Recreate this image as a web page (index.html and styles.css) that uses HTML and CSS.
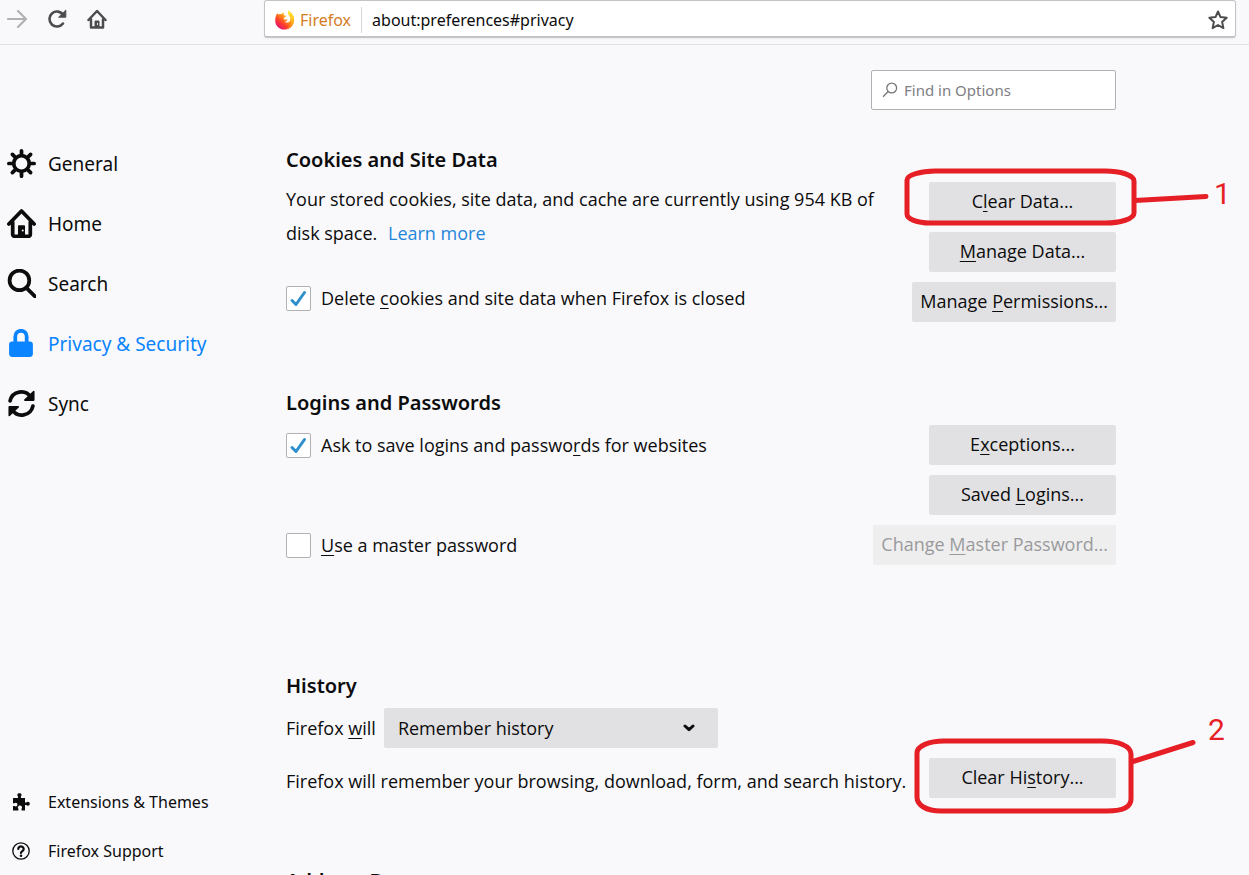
FILE: index.html
```html
<!DOCTYPE html>
<html lang="en">
<head>
<meta charset="utf-8">
<meta name="viewport" content="width=device-width, initial-scale=1">
<title>Options</title>
<link rel="stylesheet" href="styles.css">
</head>
<body>
<header class="toolbar">
  <div class="toolbar-buttons">
    <button class="tool tool-disabled" type="button" aria-label="Forward" disabled>
      <svg viewBox="0 0 20 20" fill="none" stroke="currentColor" stroke-width="2.200" stroke-linecap="round" stroke-linejoin="round"><path d="M1 10H18M11 2l8 8-8 8"/></svg>
    </button>
    <button class="tool" type="button" aria-label="Reload">
      <svg viewBox="0 0 20 20" fill="none" stroke="currentColor" stroke-width="2.6" stroke-linecap="round"><path d="M16 14.500A7.500 7.500 0 1 1 16.300 6"/><path d="M18.800 1.500V8.200H12z" fill="currentColor" stroke-width="1" stroke-linejoin="round"/></svg>
    </button>
    <button class="tool" type="button" aria-label="Home">
      <svg viewBox="0 0 20 20" fill="none" stroke="currentColor" stroke-width="2.500" stroke-linecap="round" stroke-linejoin="round"><path d="M1.500 11 10 2l8.500 9M4 10.500V18.500H16V10.500"/><path d="M8 18v-6h4v6z" fill="currentColor" stroke-width="1"/><path d="M10.500 14.500v1" stroke="#f9f9fb" stroke-width="1"/></svg>
    </button>
  </div>
  <div class="urlbar">
    <span class="identity">
      <svg class="logo" viewBox="0 0 20 20" aria-hidden="true">
        <defs>
          <linearGradient id="flame" x1="0.850" y1="0.100" x2="0.200" y2="0.900"><stop offset="0" stop-color="#ffe22e"/><stop offset="0.400" stop-color="#ff9a1a"/><stop offset="0.700" stop-color="#ff4327"/><stop offset="1" stop-color="#e5156b"/></linearGradient>
          <linearGradient id="tail" x1="0" y1="0" x2="0" y2="1"><stop offset="0" stop-color="#fff03a"/><stop offset="0.600" stop-color="#ffb41c"/><stop offset="1" stop-color="#ff7a1a"/></linearGradient>
        </defs>
        <path fill="url(#flame)" d="M2.300 3.200C2.700 4 3.200 4.300 3.800 4.400 4.800 3.900 6 3.900 6.800 4.200 7 3.300 7.800 2.500 8.600 2.200 8.200 3.300 8.500 4.600 9.300 5.200L11 6c-.4 1.200-1.800 1.400-2.300 2.200-.2.900.8 1.600 1.800 1.400.9-.2 1.700-.2 2 .4-.6 1.300-2 1.900-3.400 1.600 1.800 1.600 4.500 1.200 5.700-.7 1-1.700.8-3.900-.4-5.400C13.200 4 12.600 2.200 13.800.6c.5 1.400 2.600 2.200 3.700 4 3 4.500 1.700 10.500-2.700 13.500C10.200 21 4.200 19.600 1.500 15.200-.6 11.700 0 6.500 2.300 3.200z"/>
        <path fill="url(#tail)" d="M13.800.6c.5 1.400 2.600 2.200 3.700 4 2.700 4 1.900 9.200-1.500 12.400-1.500 1.300-3.800 2-5.500 1.700 3.500-1 5.700-3.600 5.700-7.200 0-3-1.400-4.600-2.400-6.300C13 3.800 12.800 2 13.800.6z"/>
      </svg>
      <span>Firefox</span>
    </span>
    <input class="address" type="text" value="about:preferences#privacy" aria-label="Address">
    <button class="tool star" type="button" aria-label="Bookmark this page">
      <svg viewBox="0 0 20 20" fill="none" stroke="currentColor" stroke-width="2" stroke-linejoin="round"><path d="M10 1.500l2.500 5.600 6.200.7-4.600 4.100 1.300 6.200L10 15l-5.400 3.100 1.300-6.200L1.300 7.800l6.200-.7z"/></svg>
    </button>
  </div>
</header>

<div class="page">
  <aside class="sidebar">
    <nav class="nav" aria-label="Categories">
      <a class="nav-item" href="#general">
        <svg viewBox="0 0 28 28" fill="none" stroke="currentColor" stroke-linecap="round"><circle cx="14" cy="14" r="7.500" stroke-width="3.600"/><path stroke-width="3.600" d="M14 5V1.800M14 23v3.200M5 14H1.800M23 14h3.200M7.600 7.600 5.200 5.200M20.400 7.600l2.400-2.400M7.600 20.400l-2.400 2.400M20.400 20.400l2.400 2.400"/></svg>
        <span>General</span>
      </a>
      <a class="nav-item" href="#home">
        <svg viewBox="0 0 28 28" fill="none" stroke="currentColor" stroke-width="3.600" stroke-linecap="round" stroke-linejoin="round"><path d="M1.800 14.500 14 2l12.200 12.500M5.500 12.500V24.500a1.800 1.800 0 0 0 1.800 1.800H20.700a1.800 1.800 0 0 0 1.800-1.800V12.500"/><path d="M11.500 25.500v-9h5v9z" fill="currentColor" stroke-width="1.800"/><circle cx="15.200" cy="20.800" r="1" fill="#f9f9fb" stroke="none"/></svg>
        <span>Home</span>
      </a>
      <a class="nav-item" href="#search">
        <svg viewBox="0 0 28 28" fill="none" stroke="currentColor" stroke-width="3.600" stroke-linecap="round"><circle cx="12" cy="11" r="9.500"/><path d="M19 18.500l8 8"/></svg>
        <span>Search</span>
      </a>
      <a class="nav-item nav-current" href="#privacy" aria-current="page">
        <svg viewBox="0 0 28 28" fill="none"><path d="M8 14V7.200a5.500 5.500 0 0 1 11 0V14" stroke="currentColor" stroke-width="3.600"/><rect x="2" y="12" width="23" height="15" rx="3" fill="currentColor"/></svg>
        <span>Privacy &amp; Security</span>
      </a>
      <a class="nav-item" href="#sync">
        <svg viewBox="0 0 28 28" fill="none" stroke="currentColor" stroke-width="3.600" stroke-linecap="round" stroke-linejoin="round"><path d="M3 11.500A11 11 0 0 1 23 8M25 16.500A11 11 0 0 1 5 20"/><path d="M25.800 2.500v8.200h-8.600z" fill="currentColor" stroke-width="1.600"/><path d="M2.200 25.500v-8.200h8.600z" fill="currentColor" stroke-width="1.600"/></svg>
        <span>Sync</span>
      </a>
    </nav>
    <div class="links">
      <a class="link-item" href="#addons">
        <svg viewBox="0 0 18 18" fill="currentColor"><path d="M1 5h5V3.500C5.200 2.800 5.100 1 6.100.5c.8-.5 2-.5 2.700 0 1 .6.900 2.300.1 3V5H13v4.500h1.300c.7-1 2.500-1 3.100 0 .5.800.5 1.900 0 2.600-.6 1-2.400 1-3.100 0H13V17.500H9.500v-1.800c.8-.8.700-2.300-.3-2.800-.8-.4-1.800-.4-2.500 0-1 .5-1.100 2-.3 2.800v1.800H1V13h1.500c.8.700 2.300.6 2.700-.4.300-.7.300-1.400 0-2.100-.5-1-2-1.100-2.700-.3H1z"/></svg>
        <span>Extensions &amp; Themes</span>
      </a>
      <a class="link-item" href="#support">
        <svg viewBox="0 0 18 18" fill="none" stroke="currentColor"><circle cx="9" cy="9" r="8.200" stroke-width="1.300"/><path d="M6.300 7a2.700 2.500 0 1 1 4.200 2C9.500 9.700 9 10 9 11" stroke-width="2.200" stroke-linecap="round"/><circle cx="9" cy="13.800" r="1.300" fill="currentColor" stroke="none"/></svg>
        <span>Firefox Support</span>
      </a>
    </div>
  </aside>

  <main class="content">
    <label class="find">
      <svg viewBox="0 0 16 16" fill="none" stroke="currentColor" stroke-width="1.300" aria-hidden="true"><circle cx="9.700" cy="6" r="4.900"/><path d="M6.200 9.500 1 14.700"/></svg>
      <input type="search" placeholder="Find in Options" aria-label="Find in Options">
    </label>

    <section class="group group-cookies">
      <h2>Cookies and Site Data</h2>
      <div class="columns">
        <div class="details">
          <p class="usage">Your stored cookies, site data, and cache are currently using 954 KB of disk space. <a class="learn" href="#learn">Learn more</a></p>
          <label class="check">
            <span class="box"><input type="checkbox" checked><svg viewBox="0 0 25 25" aria-hidden="true"><path d="M6 14.500 10 18.500 18.500 6.500"/></svg></span>
            <span>Delete <u>c</u>ookies and site data when Firefox is closed</span>
          </label>
        </div>
        <div class="actions">
          <div class="marked">
            <button class="btn" type="button">C<u>l</u>ear Data...</button>
            <svg class="mark mark-one" viewBox="0 0 310 60" aria-hidden="true"><path d="M31 4H201C216 4 230 8 230 14V46C230 52 216 56 201 56H26C13 56 3 52 3 47V13C3 8 17 4 31 4zM231 33.500 302 29.500"/></svg>
            <span class="number number-one">1</span>
          </div>
          <button class="btn" type="button"><u>M</u>anage Data...</button>
          <button class="btn" type="button">Manage <u>P</u>ermissions...</button>
        </div>
      </div>
    </section>

    <section class="group group-logins">
      <h2>Logins and Passwords</h2>
      <div class="rows">
        <div class="row">
          <label class="check">
            <span class="box"><input type="checkbox" checked><svg viewBox="0 0 25 25" aria-hidden="true"><path d="M6 14.500 10 18.500 18.500 6.500"/></svg></span>
            <span>Ask to save logins and passwo<u>r</u>ds for websites</span>
          </label>
          <button class="btn" type="button">E<u>x</u>ceptions...</button>
        </div>
        <div class="row row-end">
          <button class="btn" type="button">Saved <u>L</u>ogins...</button>
        </div>
        <div class="row">
          <label class="check">
            <span class="box"><input type="checkbox"><svg viewBox="0 0 25 25" aria-hidden="true"><path d="M6 14.500 10 18.500 18.500 6.500"/></svg></span>
            <span><u>U</u>se a master password</span>
          </label>
          <button class="btn" type="button" disabled>Change <u>M</u>aster Password...</button>
        </div>
      </div>
    </section>

    <section class="group group-history">
      <h2>History</h2>
      <div class="rows">
        <div class="row row-start">
          <label for="history-mode">Firefox <u>w</u>ill</label>
          <span class="select">
            <select id="history-mode">
              <option>Remember history</option>
              <option>Never remember history</option>
            </select>
            <svg viewBox="0 0 12 8" aria-hidden="true"><path d="M2 2l4 3.700L10 2"/></svg>
          </span>
        </div>
        <div class="row row-last">
          <p>Firefox will remember your browsing, download, form, and search history.</p>
          <div class="marked">
            <button class="btn" type="button">Clear Hi<u>s</u>tory...</button>
            <svg class="mark mark-two" viewBox="0 0 290 80" aria-hidden="true"><path d="M30 4H188C204 4 217 9 217 17V62C217 70 208 74 193 74H27C12 74 3 68 3 60V16C3 9 15 4 30 4zM219 24.500 279 5.500"/></svg>
            <span class="number number-two">2</span>
          </div>
        </div>
      </div>
    </section>

    <section class="group">
      <h2>Address Bar</h2>
    </section>
  </main>
</div>
</body>
</html>
```
FILE: styles.css
```css
* { box-sizing: border-box; }

body {
  display: flex;
  flex-direction: column;
  height: 100vh;
  margin: 0;
  overflow: hidden;
  background: #f9f9fb;
  color: #0c0c0d;
  font: 18px/34px "Open Sans", "Noto Sans", sans-serif;
}

h2, p { margin: 0; }

button, input, select {
  color: inherit;
  font: inherit;
}

a { text-decoration: none; }

u {
  text-decoration-thickness: 1px;
  text-underline-offset: 3px;
}

/* Toolbar */
.toolbar {
  display: flex;
  flex: none;
  align-items: flex-start;
  height: 45px;
  padding-right: 13px;
  border-bottom: 1px solid #e0e0e1;
  font-family: "Noto Sans", "Open Sans", sans-serif;
}

.toolbar-buttons {
  display: flex;
  flex: none;
  gap: 20px;
  width: 264px;
  padding: 9px 0 0 7px;
}

.tool {
  width: 20px;
  height: 20px;
  padding: 0;
  border: 0;
  background: none;
  color: #4c4c4f;
}

.tool svg { display: block; }

.tool-disabled { color: #b1b1b3; }

.urlbar {
  display: flex;
  flex: 1;
  align-items: center;
  height: 38px;
  padding: 2px 7px 0 10px;
  border: 2px solid #c4c4c6;
  border-width: 1px 1px 2px;
  border-radius: 3px;
  background: #fff;
  font-size: 16px;
  box-shadow: 0 1px 3px #0000000d;
}

.identity {
  display: flex;
  align-items: center;
  gap: 5px;
  height: 26px;
  padding-right: 10px;
  border-right: 1px solid #d7d7db;
  color: #d37c24;
}

.logo {
  width: 20px;
  height: 20px;
}

.address {
  flex: 1;
  min-width: 0;
  padding: 0 10px;
  border: 0;
  background: none;
}

/* Page */
.page {
  display: flex;
  flex: 1;
  min-height: 0;
}

.sidebar {
  display: flex;
  flex: none;
  flex-direction: column;
  justify-content: space-between;
  width: 286px;
  padding: 88px 0 0 7px;
  font-family: "Noto Sans", "Open Sans", sans-serif;
}

.nav-item, .link-item {
  display: flex;
  align-items: center;
  color: inherit;
}

.nav-item {
  gap: 12px;
  height: 60px;
  font-size: 19px;
}

.nav-item span { padding-top: 2px; }

.nav-item svg {
  width: 29px;
  height: 29px;
}

.nav-current { color: #0a84ff; }

.link-item {
  gap: 18px;
  height: 49px;
  padding-left: 5px;
  font-size: 16px;
}

.link-item svg {
  width: 18px;
  height: 18px;
}

.content {
  display: flex;
  flex: 1;
  flex-direction: column;
  max-width: 830px;
  padding-top: 25px;
}

.find {
  display: flex;
  flex: none;
  align-items: center;
  align-self: flex-end;
  gap: 6px;
  width: 245px;
  height: 40px;
  margin-bottom: 36px;
  padding: 0 10px;
  border: 1px solid #b1b1b3;
  border-radius: 2px;
  background: #fff;
  color: #76767a;
  font-family: "Noto Sans", "Open Sans", sans-serif;
  font-size: 15px;
}

.find svg {
  flex: none;
  width: 16px;
  height: 16px;
}

.find input {
  flex: 1;
  min-width: 0;
  padding: 0;
  border: 0;
  outline: 0;
  background: none;
}

.find input::placeholder { color: #808084; }

.group { flex: none; }
.group-cookies { margin-bottom: 67px; }
.group-logins { margin-bottom: 107px; }
.group-history { margin-bottom: 69px; }

h2 {
  margin-bottom: 8px;
  font-family: "Noto Sans", "Open Sans", sans-serif;
  font-size: 20px;
  font-weight: 600;
  line-height: 28px;
}

.columns {
  display: flex;
  justify-content: space-between;
}

.details {
  flex: 1;
  max-width: 600px;
}

.learn {
  margin-left: 6px;
  color: #1f86dc;
}

.actions, .rows {
  display: flex;
  flex-direction: column;
  gap: 10px;
}

.actions { align-items: flex-end; }

.row {
  display: flex;
  align-items: center;
  justify-content: space-between;
}

.row-start {
  justify-content: flex-start;
  gap: 8px;
}

.row-end { justify-content: flex-end; }

.row-last { align-items: flex-end; }

.check {
  display: flex;
  align-items: center;
  gap: 10px;
}

.details .check { margin-top: 31px; }

.box {
  display: grid;
  width: 25px;
  height: 25px;
}

.box input, .box svg {
  grid-area: 1 / 1;
  width: 25px;
  height: 25px;
  margin: 0;
}

.box input {
  appearance: none;
  border: 1px solid #b1b1b3;
  border-radius: 2px;
  background: #fff;
}

.box svg {
  z-index: 1;
  fill: none;
  stroke: #2e8fcc;
  stroke-width: 3;
  stroke-linecap: round;
  stroke-linejoin: round;
  pointer-events: none;
}

.box input:not(:checked) + svg { visibility: hidden; }

.btn {
  min-width: 187px;
  height: 40px;
  padding: 0 8px 2px;
  border: 0;
  border-radius: 2px;
  background: #e1e1e3;
  white-space: nowrap;
}

.btn:disabled {
  background: #eeeeef;
  color: #9a9a9c;
}

.select {
  display: grid;
  align-items: center;
  width: 334px;
}

.select select, .select svg { grid-area: 1 / 1; }

.select select {
  appearance: none;
  height: 40px;
  padding: 0 14px;
  border: 0;
  border-radius: 2px;
  background: #e1e1e3;
}

.select svg {
  z-index: 1;
  justify-self: end;
  width: 12px;
  height: 8px;
  margin-right: 23px;
  fill: none;
  stroke: currentColor;
  stroke-width: 3;
  stroke-linecap: round;
  stroke-linejoin: round;
  pointer-events: none;
}

/* Callouts drawn over the buttons */
.marked {
  position: relative;
  display: flex;
}

.mark, .number {
  position: absolute;
  pointer-events: none;
}

.mark {
  fill: none;
  stroke: #e61e25;
  stroke-width: 5;
  stroke-linecap: round;
}

.mark-one {
  top: -15px;
  left: -25px;
  width: 310px;
  height: 60px;
}

.mark-two {
  top: -21px;
  left: -15px;
  width: 290px;
  height: 80px;
}

.number {
  color: #e61e25;
  font: 30px/34px Roboto, "Liberation Sans", sans-serif;
}

.number-one {
  top: -5px;
  left: 285px;
}

.number-two {
  top: -45px;
  left: 279px;
}
```
